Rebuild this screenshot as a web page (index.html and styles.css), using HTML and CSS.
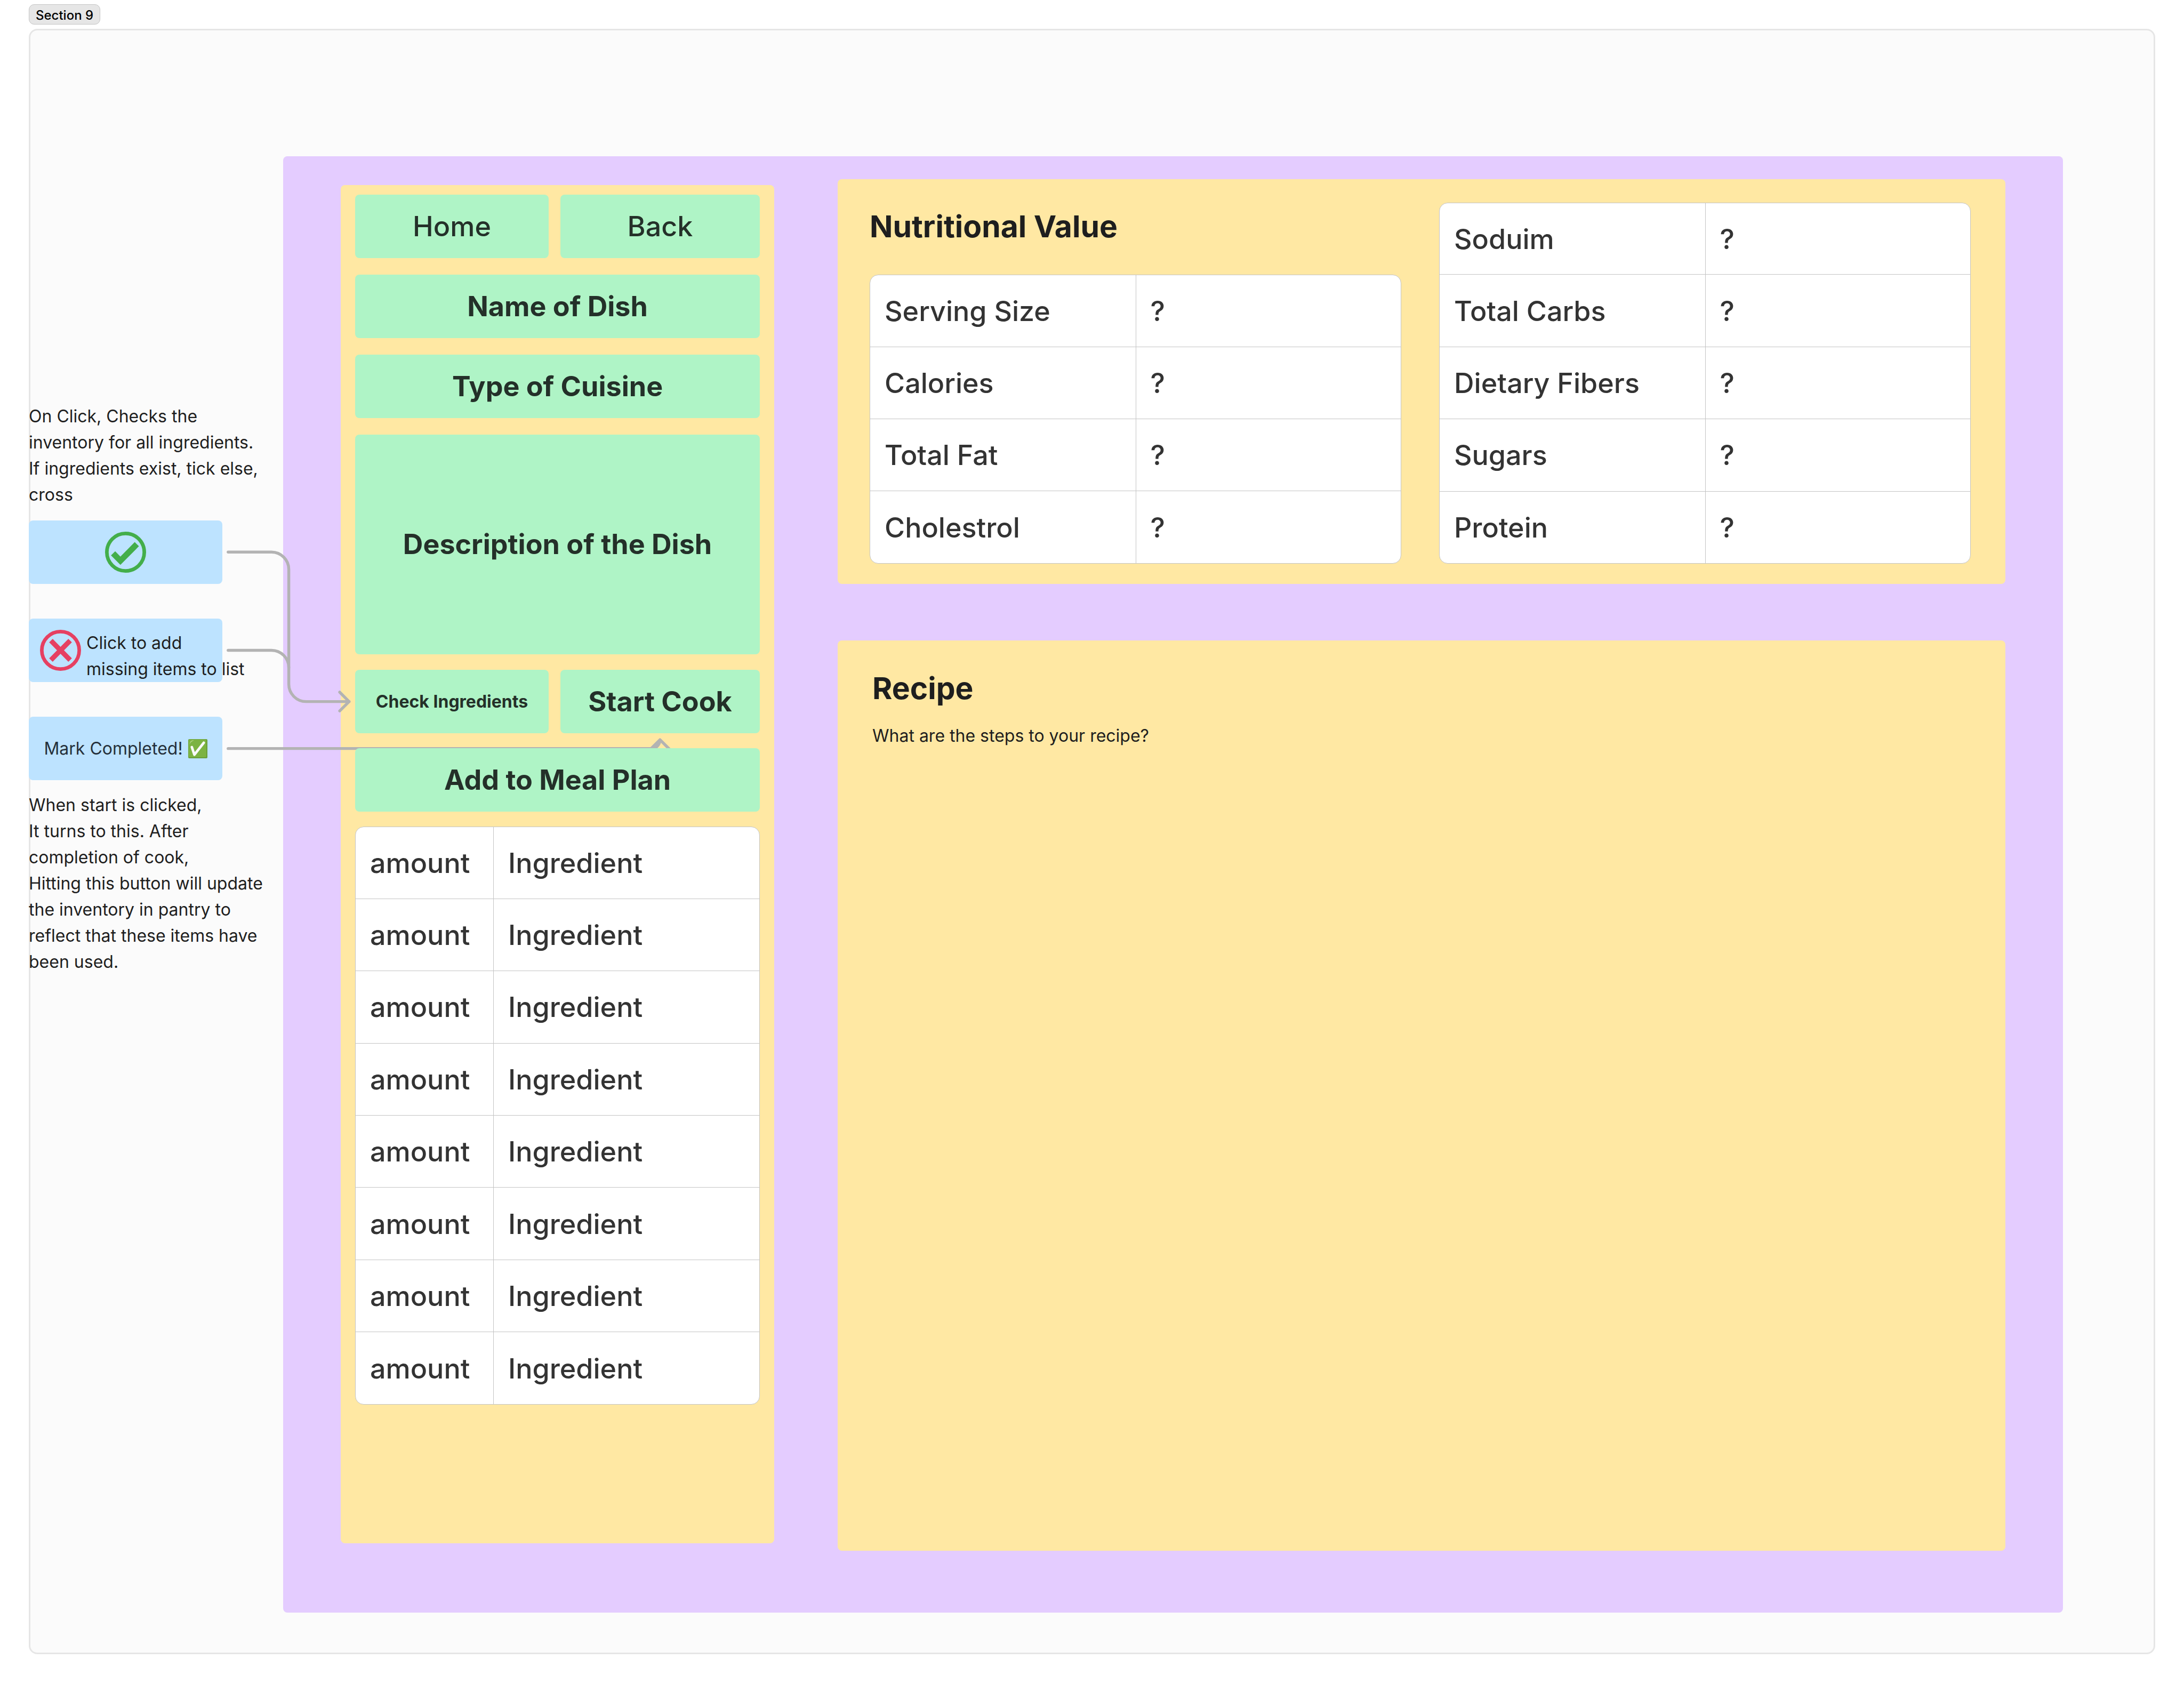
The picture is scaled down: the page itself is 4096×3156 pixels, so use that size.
FILE: index.html
```html
<!DOCTYPE html>
<html lang="en">
<head>
<meta charset="utf-8">
<title>Section 9</title>
<link rel="stylesheet" href="styles.css">
</head>
<body>
<header class="section-bar"><span class="section-tag">Section 9</span></header>
<main class="section">
  <aside class="notes">
    <p class="note-text">On Click, Checks the inventory for all ingredients.<br>If ingredients exist, tick else, cross</p>
    <button class="sticky sticky-tick" type="button" aria-label="Ingredients available">
      <svg class="stamp" viewBox="-57 -57 114 114" aria-hidden="true">
        <circle r="52" fill="none" stroke="#43ae4a" stroke-width="10"/>
        <path fill="#43ae4a" d="M-40.5 8.8L-28.8-2.7-14.3 12.1 25.4-28 37.1-16.5-14.3 35.1Z"/>
      </svg>
    </button>
    <button class="sticky sticky-cross" type="button">
      <svg class="stamp" viewBox="-57 -57 114 114" aria-hidden="true">
        <circle r="52" fill="none" stroke="#e64062" stroke-width="10"/>
        <path fill="#e64062" d="M-31.5-22.3L-21.8-32 0-9.7 21.8-32 31.5-22.3 9.7 0 31.5 22.3 21.8 32 0 9.7-21.8 32-31.5 22.3-9.7 0Z"/>
      </svg>
      <span class="sticky-label">Click to add<br>missing items to list</span>
    </button>
    <button class="sticky sticky-done" type="button">
      <span>Mark Completed!</span>
      <svg class="done-mark" viewBox="0 0 53 53" aria-hidden="true">
        <rect width="53" height="53" rx="3" fill="#699f38"/>
        <rect x="1" y="1" width="49" height="49" rx="3" fill="#7cb342"/>
        <path d="M4 15C4 6 8 3 16 3 12 6 6 8 4 15Z" fill="#a9d07c"/>
        <path d="M10 22L17 43 43 10" fill="none" stroke="#fafafa" stroke-width="7" stroke-linecap="round" stroke-linejoin="round"/>
      </svg>
    </button>
    <p class="note-text">When start is clicked,<br>It turns to this. After completion of cook,<br>Hitting this button will update the inventory in pantry to reflect that these items have been used.</p>
  </aside>

  <div class="board">
    <section class="panel dish">
      <div class="dish-head">
        <div class="pair">
          <button class="tile" type="button">Home</button>
          <button class="tile" type="button">Back</button>
        </div>
        <h1 class="tile tile-strong">Name of Dish</h1>
        <div class="tile tile-strong">Type of Cuisine</div>
        <div class="tile tile-strong tile-tall">Description of the Dish</div>
      </div>
      <div class="dish-body">
        <div class="pair">
          <button class="tile tile-strong tile-small" type="button">Check Ingredients</button>
          <button class="tile tile-strong" type="button">Start Cook</button>
        </div>
        <button class="tile tile-strong" type="button">Add to Meal Plan</button>
        <div class="sheet">
          <table class="ingredients">
            <tbody>
              <tr><td>amount</td><td>Ingredient</td></tr>
              <tr><td>amount</td><td>Ingredient</td></tr>
              <tr><td>amount</td><td>Ingredient</td></tr>
              <tr><td>amount</td><td>Ingredient</td></tr>
              <tr><td>amount</td><td>Ingredient</td></tr>
              <tr><td>amount</td><td>Ingredient</td></tr>
              <tr><td>amount</td><td>Ingredient</td></tr>
              <tr><td>amount</td><td>Ingredient</td></tr>
            </tbody>
          </table>
        </div>
      </div>
    </section>

    <div class="details">
      <section class="panel nutrition">
        <div class="nutrition-column">
          <h2 class="heading">Nutritional Value</h2>
          <div class="sheet">
            <table class="facts facts-four">
              <tbody>
                <tr><th scope="row">Serving Size</th><td>?</td></tr>
                <tr><th scope="row">Calories</th><td>?</td></tr>
                <tr><th scope="row">Total Fat</th><td>?</td></tr>
                <tr><th scope="row">Cholestrol</th><td>?</td></tr>
              </tbody>
            </table>
          </div>
        </div>
        <div class="nutrition-column">
          <div class="sheet">
            <table class="facts facts-five">
              <tbody>
                <tr><th scope="row">Soduim</th><td>?</td></tr>
                <tr><th scope="row">Total Carbs</th><td>?</td></tr>
                <tr><th scope="row">Dietary Fibers</th><td>?</td></tr>
                <tr><th scope="row">Sugars</th><td>?</td></tr>
                <tr><th scope="row">Protein</th><td>?</td></tr>
              </tbody>
            </table>
          </div>
        </div>
      </section>
      <section class="panel recipe">
        <h2 class="heading">Recipe</h2>
        <p class="recipe-text">What are the steps to your recipe?</p>
      </section>
    </div>
  </div>

  <svg class="connectors" viewBox="80 1500 1800 600" aria-hidden="true">
    <g fill="none" stroke="#b3b3b3" stroke-width="8" stroke-linecap="round" stroke-linejoin="round">
      <path d="M632 1528.4H752A48 48 0 0 1 800 1576.4V1894.4A48 48 0 0 0 848 1942.4H967"/>
      <path d="M632 1800.4H752A48 48 0 0 1 800 1848.4"/>
      <path d="M941 1916.4L967 1942.4 941 1968.4"/>
      <path d="M632 2072.4H1804"/>
      <path d="M1802 2074L1828 2048 1854 2074"/>
    </g>
    <path d="M1800 2074L1828 2045 1831 2056Q1828 2066 1818 2074Z" fill="#b3b3b3"/>
  </svg>
</main>
</body>
</html>
```

FILE: styles.css
```css
* {
  box-sizing: border-box;
}

body {
  margin: 0;
  min-height: 100vh;
  display: flex;
  flex-direction: column;
  padding: 0 54px 54px;
  background: #fff;
  color: #1e1e1e;
  font-family: Inter, "Liberation Sans", sans-serif;
  font-size: 32px;
  font-weight: 400;
  line-height: 49px;
}

h1,
h2,
p {
  margin: 0;
}

button {
  border: 0;
  padding: 0;
  font: inherit;
  color: inherit;
  cursor: pointer;
}

/* Section frame */

.section-bar {
  display: flex;
  padding: 8px 0;
}

.section-tag {
  height: 38px;
  padding: 0 12px;
  border: 1px solid #c4c4c4;
  border-radius: 10px;
  background: #e6e6e6;
  color: #000;
  font-size: 24px;
  font-weight: 500;
  line-height: 40px;
}

.section {
  position: relative;
  flex: 1;
  display: grid;
  grid-template-columns: 477px 1fr;
  padding: 239px 173px 78px 0;
  border-radius: 16px;
  background: #fbfbfb;
  box-shadow: inset 0 0 0 3px #e6e6e6;
}

/* Notes on the left */

.notes {
  display: flex;
  flex-direction: column;
  align-items: flex-start;
  padding-top: 463px;
}

.note-text {
  width: 450px;
}

.sticky {
  display: flex;
  align-items: center;
  justify-content: center;
  width: 363px;
  height: 119px;
  border-radius: 8px;
  background: #bde3ff;
}

.sticky-tick {
  margin-top: 24px;
}

.sticky-cross {
  justify-content: flex-start;
  gap: 10px;
  margin-top: 65px;
  padding-left: 21px;
}

.sticky-label {
  align-self: flex-end;
  text-align: left;
  white-space: nowrap;
}

.sticky-done {
  gap: 10px;
  margin: 65px 0 22px;
  color: #25303a;
}

.stamp {
  flex: none;
  width: 77px;
  height: 77px;
}

.done-mark {
  width: 36px;
  height: 36px;
}

/* Board */

.board {
  display: grid;
  grid-template-columns: 813px 1fr;
  gap: 119px;
  padding: 43px 108px 116px;
  border-radius: 8px;
  background: #e4ccff;
}

.panel {
  border-radius: 8px;
  background: #ffe8a3;
}

.dish {
  margin: 11px 0 14px;
  padding: 18px 27px;
}

.dish-head,
.dish-body {
  display: flex;
  flex-direction: column;
  gap: 31px;
}

.dish-body {
  gap: 28px;
  margin-top: 29px;
}

.pair {
  display: grid;
  grid-template-columns: 363px 1fr;
  gap: 22px;
}

.tile {
  position: relative;
  z-index: 1;
  display: flex;
  align-items: center;
  justify-content: center;
  height: 119px;
  border-radius: 8px;
  background: #aff4c6;
  color: #243029;
  font-size: 52px;
  font-weight: 500;
  line-height: 66px;
}

.tile-strong {
  font-weight: 700;
}

.tile-small {
  font-size: 32px;
}

.tile-tall {
  height: 412px;
}

/* Tables */

.sheet {
  position: relative;
  overflow: hidden;
  border: 1px solid #c4c4c4;
  border-radius: 16px;
  background: #fff;
}

.sheet table {
  width: 100%;
  border-spacing: 0;
  table-layout: fixed;
  color: #333;
  font-size: 52px;
  line-height: 66px;
}

.sheet th,
.sheet td {
  padding: 2px 27px 0;
  border-top: 1px solid #c4c4c4;
  font-weight: 500;
  text-align: left;
}

.sheet tr:first-child > * {
  border-top: 0;
}

.sheet tr > :last-child {
  border-left: 1px solid #c4c4c4;
}

.ingredients {
  height: 1082px;
}

.ingredients td:first-child {
  width: 258px;
}

.facts-four {
  height: 540px;
}

.facts-five {
  height: 675px;
}

/* Right-hand panels */

.details {
  display: flex;
  flex-direction: column;
  gap: 106px;
}

.nutrition {
  display: grid;
  grid-template-columns: 1fr 1fr;
  gap: 71px;
  padding: 44px 65px 38px 60px;
}

.nutrition-column {
  display: flex;
  flex-direction: column;
  justify-content: space-between;
}

.heading {
  font-size: 57px;
  font-weight: 700;
  line-height: 90px;
}

.recipe {
  flex: 1;
  padding: 45px 65px;
}

.recipe-text {
  margin-top: 19px;
}

/* Arrows from the notes to the dish buttons */

.connectors {
  position: absolute;
  left: 0;
  top: 962px;
  width: 1219px;
  pointer-events: none;
}
```
